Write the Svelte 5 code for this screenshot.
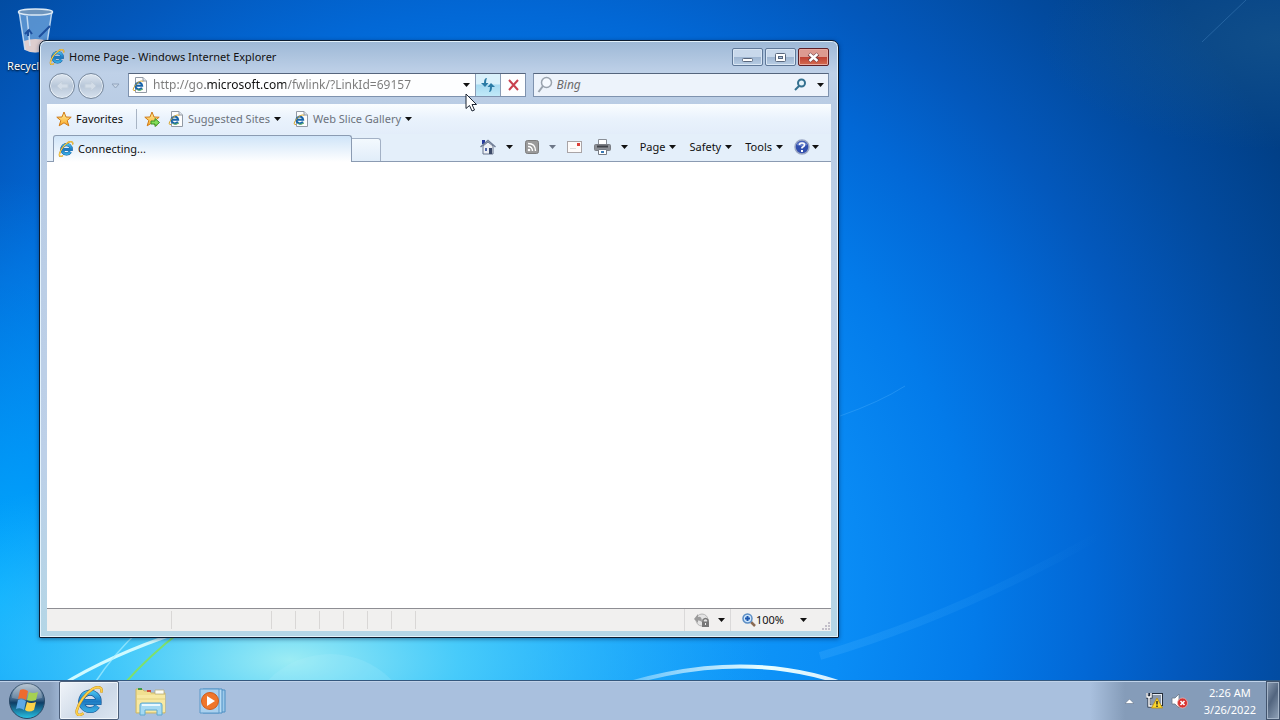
<script lang="ts">
	let address = $state('http://go.microsoft.com/fwlink/?LinkId=69157');
	let query = $state('');

	const favorites = ['Suggested Sites', 'Web Slice Gallery'];
	const menus = ['Page', 'Safety', 'Tools'];
	const panes = [125, 100, 24, 24, 24, 24, 24, 24];
</script>

{#snippet caret(color = '#111')}
	<svg class="caret" width="7" height="4" viewBox="0 0 7 4" aria-hidden="true">
		<path d="M0 0H7L3.5 4Z" fill={color} />
	</svg>
{/snippet}

{#snippet ieLogo(size: number)}
	<svg width={size} height={size} viewBox="0 0 32 32" aria-hidden="true">
		<path
			d="M24.8 21.5A9.3 9.3 0 1 1 26.3 17H9.5"
			fill="none"
			stroke="#17508f"
			stroke-width="6.4"
		/>
		<path
			d="M24.8 21.5A9.3 9.3 0 1 1 26.3 17H9.5"
			fill="none"
			stroke="url(#ie-blue)"
			stroke-width="5.2"
		/>
		<path
			d="M29 7C31 1 26 0 20 3C12 8 5 18 3 26C2 32 6 32 10 29"
			fill="none"
			stroke="#c78a16"
			stroke-width="2.8"
		/>
		<path
			d="M29 7C31 1 26 0 20 3C12 8 5 18 3 26C2 32 6 32 10 29"
			fill="none"
			stroke="#fbd04c"
			stroke-width="2"
		/>
	</svg>
{/snippet}

{#snippet pageIcon()}
	<svg width="16" height="16" viewBox="0 0 16 16" aria-hidden="true">
		<path d="M3.5 .5H11L14.5 4V15.5H3.5Z" fill="#fdfdfd" stroke="#929aa5" />
		<path d="M11 .5V4H14.5" fill="#dde3ea" stroke="#929aa5" />
		<path d="M9.8 10.6A3.4 3.4 0 1 1 10.2 8.8H4" fill="none" stroke="#1763a8" stroke-width="2" />
		<path d="M11 5C11 3 7 4 4 7.500C1 11 0 14 3 13.500" fill="none" stroke="#d9a62c" />
		<path d="M5 12.500Q8 14.500 11 12" fill="none" stroke="#49a55a" />
	</svg>
{/snippet}

{#snippet star()}
	<path
		d="M8 1L10 6L15.200 6.200L11.200 9.500L12.800 14.800L8 11.800L3.200 14.800L4.800 9.500L.8 6.200L6 6Z"
		fill="url(#gold)"
		stroke="#cf7a18"
		stroke-linejoin="round"
	/>
{/snippet}

<div class="screen">
	<svg class="wallpaper" viewBox="0 0 1280 720" preserveAspectRatio="none" aria-hidden="true">
		<defs>
			<radialGradient id="sky" gradientUnits="userSpaceOnUse" cx="500" cy="600" r="950">
				<stop offset="0" stop-color="#1aa8fc" />
				<stop offset=".36" stop-color="#0a8df6" />
				<stop offset=".5" stop-color="#037bea" />
				<stop offset=".62" stop-color="#0268d6" />
				<stop offset=".72" stop-color="#0358bc" />
				<stop offset=".84" stop-color="#024a9e" />
				<stop offset=".95" stop-color="#013f86" />
			</radialGradient>
			<radialGradient id="left-glow">
				<stop offset="0" stop-color="#00acff" />
				<stop offset="1" stop-color="#009cff" stop-opacity="0" />
			</radialGradient>
			<radialGradient id="glow">
				<stop offset="0" stop-color="#9cecf4" />
				<stop offset=".35" stop-color="#50d2fa" stop-opacity=".85" />
				<stop offset="1" stop-color="#20b4ff" stop-opacity="0" />
			</radialGradient>
			<radialGradient id="haze">
				<stop offset="0" stop-color="#2c6a90" stop-opacity=".35" />
				<stop offset="1" stop-color="#2c6a90" stop-opacity="0" />
			</radialGradient>
			<linearGradient id="beam" x1="0" y1="0" x2="1" y2="0">
				<stop offset="0" stop-color="#4cb4ff" stop-opacity=".25" />
				<stop offset="1" stop-color="#4cb4ff" stop-opacity="0" />
			</linearGradient>
			<linearGradient id="arc" x1="0" y1="0" x2="1" y2="0">
				<stop offset="0" stop-color="#fff" stop-opacity=".1" />
				<stop offset=".65" stop-color="#eaffff" />
				<stop offset="1" stop-color="#fff" stop-opacity=".8" />
			</linearGradient>
			<linearGradient id="ie-blue" x1="0" y1="0" x2="0" y2="1">
				<stop offset="0" stop-color="#41b9ea" />
				<stop offset=".5" stop-color="#1b78c2" />
				<stop offset="1" stop-color="#35a8df" />
			</linearGradient>
			<linearGradient id="gold" x1="0" y1="0" x2="0" y2="1">
				<stop offset="0" stop-color="#fff3a0" />
				<stop offset="1" stop-color="#fba928" />
			</linearGradient>
			<linearGradient id="orb-shell" x1="0" y1="0" x2="0" y2="1">
				<stop offset="0" stop-color="#a7b9c9" />
				<stop offset=".45" stop-color="#3c6286" />
				<stop offset=".55" stop-color="#0e3e66" />
				<stop offset="1" stop-color="#27c3e6" />
			</linearGradient>
		</defs>
		<rect width="1280" height="720" fill="url(#sky)" />
		<ellipse cx="0" cy="600" rx="260" ry="420" fill="url(#left-glow)" />
		<ellipse cx="290" cy="660" rx="480" ry="200" fill="url(#glow)" />
		<ellipse cx="1280" cy="40" rx="240" ry="110" fill="url(#haze)" />
		<circle cx="330" cy="740" r="86" fill="#b8f2ff" opacity=".16" />
		<path d="M590 696Q740 640 860 690" fill="none" stroke="url(#arc)" stroke-width="4" />
		<path d="M60 686Q110 655 180 632" fill="none" stroke="#cffaff" stroke-width="3" />
		<path d="M94 684Q115 652 140 630" fill="none" stroke="#a9efff" stroke-width="1.500" opacity=".7" />
		<path d="M124 684Q150 655 180 632" fill="none" stroke="#7fe069" stroke-width="2" />
		<path d="M840 416Q880 402 905 386" fill="none" stroke="#5cb8ff" opacity=".3" />
		<path d="M820 656Q960 615 1100 535" fill="none" stroke="url(#beam)" stroke-width="8" />
		<path d="M1202 42L1246 0" stroke="#6fb0e8" opacity=".25" />
	</svg>

	<main class="desktop">
		<button class="shortcut">
			<svg width="40" height="46" viewBox="0 0 40 46" aria-hidden="true">
				<path d="M3 3L9 42Q19 47 30 42L36 3Z" fill="#a7cff2" fill-opacity=".5" />
				<path d="M8 33Q19 29 32 33L30 42Q19 47 9 42Z" fill="#ecd5ce" opacity=".9" />
				<path d="M3 3L9 42M36 3L30 42M11 8L14 38" stroke="#dcecfb" stroke-width="1.500" fill="none" opacity=".8" />
				<path d="M12 28V22M9 26L13 22L16 26M23 29L34 18" stroke="#1d4f9d" stroke-width="2" fill="none" />
				<ellipse cx="19.500" cy="4" rx="17" ry="3" fill="#6e95bd" stroke="#dce9f5" stroke-width="1.500" />
			</svg>
			<span>Recycle Bin</span>
		</button>

		<section class="window" aria-label="Windows Internet Explorer">
			<header class="titlebar">
				{@render ieLogo(16)}
				<h1>Home Page - Windows Internet Explorer</h1>
				<div class="window-buttons">
					<button aria-label="Minimize">
						<svg width="13" height="13" viewBox="0 0 13 13">
							<rect x="1.500" y="7.500" width="10" height="3" rx="1" fill="#fff" stroke="#59677d" />
						</svg>
					</button>
					<button aria-label="Maximize">
						<svg width="13" height="13" viewBox="0 0 13 13">
							<rect x="1.500" y="2.500" width="10" height="8" rx="1" fill="#fff" stroke="#59677d" />
							<rect x="4.500" y="5.500" width="4" height="2" fill="#aac0db" stroke="#59677d" />
						</svg>
					</button>
					<button class="close" aria-label="Close">
						<svg width="13" height="13" viewBox="0 0 13 13">
							<path d="M2 3L11 10M11 3L2 10" stroke="#6b3b40" stroke-width="4" />
							<path d="M2.500 3L10.500 10M10.500 3L2.500 10" stroke="#fff" stroke-width="2.500" />
						</svg>
					</button>
				</div>
			</header>

			<nav class="navbar" aria-label="Navigation">
				<div class="travel">
					<button class="round" aria-label="Back" disabled>
						<svg width="16" height="16" viewBox="0 0 16 16">
							<path d="M8 3L3 8L8 13V10H14V6H8Z" fill="#d3dde8" stroke="#c3cfdc" />
						</svg>
					</button>
					<button class="round" aria-label="Forward" disabled>
						<svg width="16" height="16" viewBox="0 0 16 16">
							<path d="M8 3L13 8L8 13V10H2V6H8Z" fill="#d3dde8" stroke="#c3cfdc" />
						</svg>
					</button>
					<button class="recent" aria-label="Recent pages">
						<svg width="9" height="6" viewBox="0 0 9 6">
							<path d="M1 1H8L4.500 5Z" fill="#c9d7e8" stroke="#93a5bd" />
						</svg>
					</button>
				</div>

				<div class="address">
					{@render pageIcon()}
					<input class="url" aria-label="Address" bind:value={address} spellcheck="false" />
					<button class="drop" aria-label="Show address history">{@render caret()}</button>
					<button class="refresh" aria-label="Refresh">
						<svg width="16" height="16" viewBox="0 0 16 16">
							<path d="M7 1Q4 1 4 6H1L5 10L8.500 6H6Q6 3 7 1Z" fill="#2b7ba5" />
							<path d="M9 15Q12 15 12 10H15L11 6L7.500 10H10Q10 13 9 15Z" fill="#2b7ba5" />
						</svg>
					</button>
					<button class="stop" aria-label="Stop">
						<svg width="14" height="14" viewBox="0 0 14 14">
							<path d="M3 2L12 12M12 2L3 12" stroke="#c8414f" stroke-width="2" />
						</svg>
					</button>
				</div>

				<div class="search">
					<svg width="16" height="18" viewBox="0 0 16 18" aria-hidden="true">
						<circle cx="9.500" cy="6.500" r="5" fill="#f6faff" stroke="#9aa3ae" stroke-width="1.500" />
						<path d="M6 10L1.500 16" stroke="#9aa3ae" stroke-width="2" />
					</svg>
					<input aria-label="Search" placeholder="Bing" bind:value={query} />
					<button aria-label="Search Bing">
						<svg width="14" height="14" viewBox="0 0 14 14">
							<circle cx="8.500" cy="5" r="3.500" fill="#e4f3fa" stroke="#34708f" stroke-width="2" />
							<path d="M6 8L2 12" stroke="#34708f" stroke-width="2" />
						</svg>
					</button>
					<button class="drop" aria-label="Search options">{@render caret()}</button>
				</div>
			</nav>

			<div class="client">
				<div class="favorites">
					<button class="fav-main">
						<svg width="16" height="16" viewBox="0 0 16 16" aria-hidden="true">{@render star()}</svg>
						Favorites
					</button>
					<button class="fav-add" aria-label="Add to Favorites Bar">
						<svg width="16" height="16" viewBox="0 0 16 16">
							{@render star()}
							<path d="M7 10H11V7.500L15.500 11.500L11 15.500V13H7Z" fill="#83dd57" stroke="#37932b" />
						</svg>
					</button>
					{#each favorites as name}
						<button class="fav-link">
							{@render pageIcon()}
							<span>{name}</span>
							{@render caret()}
						</button>
					{/each}
				</div>

				<div class="tabrow">
					<button class="tab">
						{@render ieLogo(16)}
						Connecting...
					</button>
					<button class="new-tab" aria-label="New Tab"></button>

					<div class="commands">
						<button class="split" aria-label="Home">
							<svg width="16" height="16" viewBox="0 0 16 16">
								<path d="M2 1H5V5H2Z" fill="#273a9c" />
								<path d="M3 7L8 3L13 7V15H3Z" fill="#eceff4" stroke="#69758c" />
								<path d="M.500 8L8 1.500L15.500 8" fill="none" stroke="#717e97" stroke-width="1.500" />
								<path d="M9 9H12V15H9Z" fill="#3c4a68" />
								<path d="M5 9H7V12H5Z" fill="#4f65a8" />
							</svg>
							{@render caret()}
						</button>
						<button class="split" aria-label="Feeds" disabled>
							<svg width="14" height="14" viewBox="0 0 14 14">
								<rect x=".500" y=".500" width="13" height="13" rx="2" fill="#9a9a9a" stroke="#7d7d7d" />
								<circle cx="4" cy="10" r="1.300" fill="#fff" />
								<path d="M3 6.500Q7.500 6.500 7.500 11M3 3.500Q10.500 3.500 10.500 11" fill="none" stroke="#fff" stroke-width="1.400" />
							</svg>
							{@render caret('#6c7686')}
						</button>
						<button class="mail" aria-label="Read mail">
							<svg width="15" height="12" viewBox="0 0 15 12">
								<rect x=".500" y=".500" width="14" height="11" fill="#fdfbfa" stroke="#a9a4a6" />
								<rect x="10" y="2" width="3" height="3" fill="#dc4038" />
								<path d="M3 7.500H9" stroke="#dcdcdc" />
							</svg>
						</button>
						<button class="split" aria-label="Print">
							<svg width="17" height="16" viewBox="0 0 17 16">
								<path d="M4.500 .500H12.500V6H4.500Z" fill="#fff" stroke="#8a8f97" />
								<rect x=".500" y="5.500" width="16" height="6" rx="1" fill="#8b8e94" stroke="#7b7e84" />
								<path d="M3 7.500H14" stroke="#404349" stroke-width="2" />
								<path d="M4.500 10.500H12.500V15.500H4.500Z" fill="#fff" stroke="#777c84" />
								<path d="M7 13H10" stroke="#3a79b5" stroke-width="2" />
							</svg>
							{@render caret()}
						</button>
						{#each menus as name}
							<button class="menu">{name}{@render caret()}</button>
						{/each}
						<button class="help" aria-label="Help">
							<svg width="16" height="16" viewBox="0 0 16 16">
								<circle cx="8" cy="8" r="7" fill="#314fae" stroke="#9aa6c4" stroke-width="1.500" />
								<path d="M2.500 6A6 6 0 0 1 13.500 6Q8 8 2.500 6Z" fill="#7f97d8" opacity=".7" />
								<path d="M5.500 6Q5.500 4 8 4T10.500 6Q10.500 7.200 8 8.500V9.500" fill="none" stroke="#fff" stroke-width="1.600" />
								<rect x="7" y="11" width="2" height="2" fill="#fff" />
							</svg>
							{@render caret()}
						</button>
					</div>
				</div>

				<div class="page"></div>

				<footer class="statusbar">
					{#each panes as width}
						<span class="pane" style="width: {width}px"></span>
					{/each}
					<button class="privacy" aria-label="Protected Mode">
						<svg width="16" height="16" viewBox="0 0 16 16">
							<circle cx="8" cy="8" r="6" fill="#e3e3e3" stroke="#b5b5b5" />
							<path d="M0 7L4 2V5Q8 4 8 10Q6 8 4 8.500V11Z" fill="#9b9b9b" />
							<path d="M9 10V8Q11.500 5 14 8V10" fill="none" stroke="#777" stroke-width="1.500" />
							<rect x="8" y="9.500" width="7" height="5.500" fill="#777" />
							<path d="M11.500 11V13" stroke="#eee" />
						</svg>
						{@render caret()}
					</button>
					<button class="zoom">
						<svg width="14" height="14" viewBox="0 0 14 14" aria-hidden="true">
							<path d="M9 9L13 13" stroke="#8a6a52" stroke-width="2.500" />
							<circle cx="5.500" cy="5.500" r="4.500" fill="#cfe6fa" stroke="#5c8ec4" stroke-width="1.500" />
							<path d="M5.500 3V8M3 5.500H8" stroke="#1d58b0" stroke-width="2" />
						</svg>
						<span>100%</span>
						{@render caret()}
					</button>
					<svg class="grip" width="9" height="9" viewBox="0 0 9 9" aria-hidden="true">
						<path d="M6 0H8V2H6ZM6 3H8V5H6ZM6 6H8V8H6ZM3 3H5V5H3ZM3 6H5V8H3ZM0 6H2V8H0Z" fill="#c3bfc9" />
					</svg>
				</footer>
			</div>
		</section>

		<svg class="cursor" width="14" height="20" viewBox="0 0 14 20" aria-hidden="true">
			<path
				d="M1 1V15.500L4.500 12.500L7 18L9.500 17L7 11.500H11.500Z"
				fill="#fff"
				stroke="#1b2433"
				stroke-linejoin="round"
			/>
		</svg>
	</main>

	<footer class="taskbar">
		<button class="start" aria-label="Start">
			<svg width="38" height="38" viewBox="0 0 38 38">
				<circle cx="19" cy="19" r="17.500" fill="url(#orb-shell)" stroke="#2b4967" />
				<path d="M4 16A15 15 0 0 1 34 16Q19 20 4 16Z" fill="#fff" opacity=".22" />
				<path d="M12 8Q16 6 20 9L18 18Q14 15 10 17Z" fill="#ee6a2e" />
				<path d="M21 10Q25 12 30 10L28 18Q23 20 19 18Z" fill="#a6d052" />
				<path d="M10 18Q14 16 18 19L16 28Q12 25 8 27Z" fill="#5fa9e6" />
				<path d="M19 20Q23 22 28 20L26 28Q21 31 17 28Z" fill="#fcd24a" />
			</svg>
		</button>
		<button class="task active" aria-label="Internet Explorer">{@render ieLogo(30)}</button>
		<button class="task" aria-label="Windows Explorer">
			<svg width="32" height="30" viewBox="0 0 32 30">
				<path d="M1 3H7L9 5H14L16 7H30V27H1Z" fill="#f1e091" stroke="#cdb768" />
				<path d="M3 2H7V4H3Z" fill="#3d9d4b" />
				<path d="M12 4H16V6H12Z" fill="#cf4a3a" />
				<path d="M20 4H29V8H20Z" fill="#fdfdf5" stroke="#b9ae7e" stroke-width=".8" />
				<path d="M2 9H30V26H2Z" fill="#f7e9a3" />
				<path d="M2 13H30" stroke="#e4cf7b" />
				<path d="M5 29V19Q5 17 7 17H25Q27 17 27 19V29H22V24H10V29Z" fill="#a4d9f2" stroke="#5ea9d0" />
				<path d="M7 19H25" stroke="#e8f8ff" stroke-width="2" />
			</svg>
		</button>
		<button class="task" aria-label="Windows Media Player">
			<svg width="30" height="28" viewBox="0 0 30 28">
				<path d="M8 3H27V25H8Z" fill="#9cc9ea" stroke="#4d8fc4" />
				<path d="M5 2H24V26H5Z" fill="#b7dcf4" stroke="#4d8fc4" />
				<path d="M2 2H21V26H2Z" fill="#a9d0ee" stroke="#5b98c9" />
				<circle cx="12" cy="14" r="8.500" fill="#f0762a" stroke="#cf5d1b" />
				<path d="M9 9L17 14L9 19Z" fill="#fff" />
			</svg>
		</button>

		<div class="tray">
			<button aria-label="Show hidden icons">
				<svg width="9" height="6" viewBox="0 0 9 6">
					<path d="M0 5.500L4.500 1L9 5.500Z" fill="#fff" stroke="#55657c" stroke-width=".5" />
				</svg>
			</button>
			<button aria-label="Network">
				<svg width="17" height="17" viewBox="0 0 17 17">
					<rect x="4" y="2" width="12" height="11" fill="#8d9aab" stroke="#222b38" stroke-width="2" />
					<rect x="4.500" y="2.500" width="11" height="10" fill="none" stroke="#e9eef4" />
					<path d="M1 1V5H5V1M3 5V14H7" fill="none" stroke="#222b38" stroke-width="3" />
					<path d="M1 1V5H5V1M3 5V14H7" fill="none" stroke="#fff" stroke-width="1.500" />
					<path d="M11 6L16.500 16H5.500Z" fill="#fbd72f" stroke="#b98d0c" stroke-width=".8" />
					<path d="M11 9V12.500M11 13.500V15" stroke="#222" stroke-width="1.400" />
				</svg>
			</button>
			<button aria-label="Volume muted">
				<svg width="17" height="16" viewBox="0 0 17 16">
					<path d="M1 5H4L8 1V15L4 11H1Z" fill="#fff" stroke="#6a7686" stroke-width=".8" />
					<circle cx="11.500" cy="10" r="5" fill="#d8322f" stroke="#f2b3ad" stroke-width=".8" />
					<path d="M9.500 8L13.500 12M13.500 8L9.500 12" stroke="#fff" stroke-width="1.600" />
				</svg>
			</button>
			<button class="clock">
				<time datetime="2022-03-26T02:26">2:26 AM<br />3/26/2022</time>
			</button>
			<button class="show-desktop" aria-label="Show desktop"></button>
		</div>
	</footer>
</div>

<style>
	:global(body) {
		margin: 0;
	}
	.screen {
		position: relative;
		display: flex;
		flex-direction: column;
		height: 100vh;
		overflow: hidden;
		font-family: 'Noto Sans', 'Open Sans', sans-serif;
		font-size: 11px;
		line-height: 16px;
		color: #111;
	}
	button,
	input {
		font: inherit;
		color: inherit;
		margin: 0;
		padding: 0;
		border: 0;
		background: none;
		outline: none;
	}
	button {
		display: flex;
		align-items: center;
		justify-content: center;
		flex: none;
		white-space: nowrap;
	}
	svg {
		display: block;
		flex: none;
	}
	.wallpaper {
		position: absolute;
		inset: 0;
		width: 100%;
		height: 100%;
	}
	.desktop {
		position: relative;
		flex: 1;
		min-height: 0;
	}
	.shortcut {
		flex-direction: column;
		gap: 4px;
		width: 72px;
		padding-top: 8px;
		color: #fff;
		text-shadow: 0 1px 2px #000;
	}

	/* browser window */
	.window {
		position: absolute;
		inset: 40px 441px 42px 39px;
		display: flex;
		flex-direction: column;
		box-sizing: border-box;
		padding: 0 7px 6px;
		border: 1px solid #0d1c30;
		border-radius: 7px 7px 1px 1px;
		background: linear-gradient(#9db8d6, #bfd1e8 32px, #b9cce4 64px, #bdd0e8 70%, #b4d6e6);
		box-shadow:
			inset 0 0 0 1px #e4f2fb,
			0 1px 4px rgba(0, 20, 60, 0.5);
	}
	.titlebar {
		display: flex;
		align-items: center;
		gap: 4px;
		height: 32px;
		padding: 0 2px;
	}
	.titlebar h1 {
		flex: 1;
		margin: 0;
		font-size: 11px;
		font-weight: 400;
	}
	.window-buttons {
		display: flex;
		gap: 2px;
	}
	.window-buttons button {
		width: 31px;
		height: 18px;
		border: 1px solid #5f7898;
		border-radius: 2px;
		background: linear-gradient(#c8d8eb 50%, #9eb5d1 50%, #b8cde4);
		box-shadow: inset 0 0 0 1px #d9e6f4;
		box-sizing: border-box;
	}
	.window-buttons .close {
		border-color: #5d1f26;
		background: linear-gradient(#dd9a90 50%, #bf3f31 50%, #d46c50);
		box-shadow: inset 0 0 0 1px #e8aaa0;
	}
	.navbar {
		display: flex;
		align-items: flex-start;
		height: 31px;
		padding: 0 2px;
	}
	.travel {
		display: flex;
		align-items: center;
		gap: 3px;
		width: 79px;
		height: 26px;
	}
	.round {
		width: 26px;
		height: 26px;
		box-sizing: border-box;
		border: 1px solid #75869b;
		border-radius: 50%;
		background: linear-gradient(#dfe7f0, #b8c7d9 50%, #d6e1ed);
		box-shadow: inset 0 0 0 1px #e9f0f7;
	}
	.recent {
		width: 16px;
	}
	.address,
	.search {
		display: flex;
		align-items: center;
		box-sizing: border-box;
		height: 24px;
		border: 1px solid #7e92ae;
		border-top-color: #55657d;
		background: #fdfeff;
	}
	.address {
		flex: 1;
		padding-left: 3px;
	}
	.url {
		flex: 1;
		min-width: 0;
		padding-left: 5px;
		font-size: 12px;
		/* the host name stands out from the rest of the address */
		background: linear-gradient(90deg, #7a7a7a 57px, #111 57px 138px, #7a7a7a 138px);
		background-clip: text;
		-webkit-text-fill-color: transparent;
	}
	.drop {
		width: 16px;
		height: 100%;
	}
	.refresh,
	.stop {
		width: 25px;
		height: 100%;
		box-sizing: border-box;
		border-left: 1px solid #8a9cb5;
	}
	.refresh {
		background: linear-gradient(#daf1fb 45%, #a8dbf2 50%, #c1e9f8);
	}
	.search {
		flex: 0 0 38%;
		margin-left: 7px;
		padding-left: 3px;
		background: #edf3fb;
	}
	.search input {
		flex: 1;
		min-width: 0;
		padding-left: 4px;
		font-size: 12px;
	}
	.search input::placeholder {
		color: #6b6b6b;
		font-style: italic;
		opacity: 1;
	}
	.search .drop {
		margin-left: 5px;
	}

	.client {
		display: flex;
		flex-direction: column;
		flex: 1;
		min-height: 0;
		background: #fff;
	}
	.favorites {
		display: flex;
		align-items: center;
		height: 30px;
		padding-left: 9px;
		background: linear-gradient(#fafdff, #e9f2fc 50%, #e3edfa);
	}
	.fav-main {
		gap: 4px;
		padding-right: 13px;
		border-right: 1px solid #a8b4c4;
		height: 20px;
	}
	.fav-add {
		margin: 0 8px 0 7px;
	}
	.fav-link {
		gap: 4px;
		margin-right: 12px;
		color: #6d737c;
	}
	.tabrow {
		display: flex;
		align-items: flex-end;
		height: 28px;
		box-sizing: border-box;
		padding-left: 6px;
		border-bottom: 1px solid #8b9bb2;
		background: #e4effa;
	}
	.tab {
		justify-content: flex-start;
		gap: 4px;
		flex: 0 1 299px;
		height: 27px;
		margin-bottom: -1px;
		padding-left: 4px;
		box-sizing: border-box;
		border: 1px solid #8b9bb2;
		border-bottom: 0;
		border-radius: 3px 3px 0 0;
		background: linear-gradient(#cfe4f8, #fff);
	}
	.new-tab {
		width: 29px;
		height: 23px;
		box-sizing: border-box;
		border: 1px solid #a3b1c5;
		border-left: 0;
		border-bottom: 0;
		border-radius: 0 3px 0 0;
		background: linear-gradient(#f3f9fe, #e1edf9);
	}
	.commands {
		display: flex;
		align-items: center;
		justify-content: flex-end;
		flex: 1;
		height: 27px;
		box-sizing: border-box;
		padding: 0 12px 2px 0;
	}
	.split {
		gap: 10px;
		margin-right: 12px;
	}
	.mail {
		margin: 0 12px 0 -1px;
	}
	.menu {
		gap: 4px;
		margin-right: 13px;
	}
	.help {
		gap: 2px;
		margin-left: -2px;
	}
	.page {
		flex: 1;
		min-height: 0;
	}
	.statusbar {
		position: relative;
		display: flex;
		align-items: center;
		height: 23px;
		box-sizing: border-box;
		border-top: 1px solid #8e8e93;
		background: #f1f0ef;
	}
	.pane {
		height: 18px;
		box-sizing: border-box;
		border-right: 1px solid #d9d7d6;
	}
	.privacy {
		gap: 8px;
		height: 100%;
		margin-left: auto;
		padding: 0 5px 0 9px;
		border-left: 1px solid #dad9d9;
	}
	.zoom {
		height: 100%;
		padding: 0 24px 0 11px;
		border-left: 1px solid #dad9d9;
	}
	.zoom span {
		margin-right: 16px;
	}
	.grip {
		position: absolute;
		right: 0;
		bottom: 0;
	}
	.cursor {
		position: absolute;
		left: 465px;
		top: 93px;
	}

	/* taskbar */
	.taskbar {
		position: relative;
		display: flex;
		height: 40px;
		box-sizing: border-box;
		border-top: 1px solid #33587f;
		background: linear-gradient(
			90deg,
			#8ba1be 50px,
			#a9c0de 66px calc(100% - 190px),
			#859cb9 calc(100% - 155px)
		);
		box-shadow: inset 0 1px #c0d3ea;
	}
	.start {
		width: 54px;
	}
	.task {
		width: 60px;
		height: 39px;
		margin-left: 2px;
		box-sizing: border-box;
	}
	.task.active {
		margin-left: 5px;
		border: 1px solid #4c5f7a;
		border-radius: 2px;
		background: linear-gradient(135deg, #f0f4f9, #ccd8e7 60%, #dde6f1);
		box-shadow: inset 0 0 0 1px #f1f6fb;
	}
	.tray {
		display: flex;
		align-items: center;
		gap: 8px;
		margin-left: auto;
		color: #fff;
	}
	.tray button:first-child {
		margin-right: 4px;
	}
	.clock {
		margin-left: 8px;
		line-height: 17px;
		text-align: center;
	}
	.show-desktop {
		width: 14px;
		height: 100%;
		margin-left: 2px;
		box-sizing: border-box;
		border: 1px solid #42546d;
		box-shadow: inset 0 0 0 1px #a5b5c8;
		background: linear-gradient(120deg, #8a9bb1, #52657f 45%, #92a4ba);
	}
</style>
